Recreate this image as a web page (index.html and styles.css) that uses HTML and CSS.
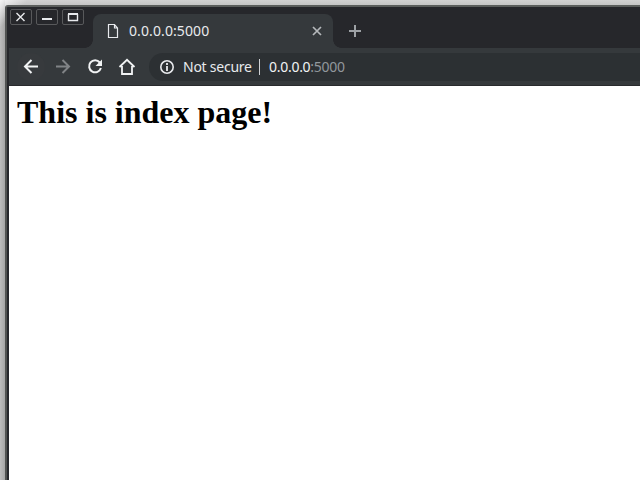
FILE: index.html
```
<!DOCTYPE html>
<html lang="en">
<head>
<meta charset="utf-8">
<title>0.0.0.0:5000</title>
<link rel="stylesheet" href="styles.css">
</head>
<body>
<div class="window">
  <header class="tabstrip">
    <div class="controls">
      <span class="control"><svg width="20" height="14" viewBox="0 0 20 14"><path d="M5.500 3l8 8M13.500 3l-8 8"/></svg></span>
      <span class="control"><svg width="20" height="14" viewBox="0 0 20 14"><path d="M5 9h10" stroke-width="2"/></svg></span>
      <span class="control"><svg width="20" height="14" viewBox="0 0 20 14"><path d="M5.500 4v6.500h9V4"/><path d="M5 4h10" stroke-width="2"/></svg></span>
    </div>
    <div class="tab">
      <svg class="page-icon" width="12" height="16" viewBox="0 0 12 16"><path d="M1.500 1.500h6l3 3.500v9.500h-9z M7.500 1.500V5h3"/></svg>
      <span class="tab-title">0.0.0.0:5000</span>
      <svg class="close" width="10" height="10" viewBox="0 0 10 10"><path d="M1 1l8 8M9 1L1 9"/></svg>
    </div>
    <svg class="new-tab" width="14" height="14" viewBox="0 0 14 14"><path d="M7 1v12M1 7h12"/></svg>
  </header>
  <nav class="toolbar">
    <span class="tool back"><svg width="16" height="16" viewBox="0 0 16 16"><path d="M15 7.500H2.500M8.500 1L2 7.500 8.500 14"/></svg></span>
    <span class="tool forward"><svg width="16" height="16" viewBox="0 0 16 16"><path d="M1 7.500h12.500M7.500 1L14 7.500 7.500 14"/></svg></span>
    <span class="tool"><svg width="16" height="16" viewBox="0 0 16 16"><path d="M12.800 3.500A6 6 0 1 0 13.900 9"/><path class="solid" d="M15 0.500v6.500H8.500z"/></svg></span>
    <span class="tool"><svg width="18" height="18" viewBox="0 0 18 18"><path d="M1.500 9L9 1.800l7.500 7.200M4 8v8h10V8" stroke-width="1.800"/></svg></span>
    <div class="address">
      <svg class="info" width="16" height="16" viewBox="0 0 16 16"><circle cx="8" cy="8" r="6.200"/><path d="M8 7v5M8 4v2" stroke-width="1.800"/></svg>
      <span class="security">Not secure</span>
      <span class="divider"></span>
      <span class="url">0.0.0.0<span class="port">:5000</span></span>
    </div>
  </nav>
  <main class="page"><h1>This is index page!</h1></main>
</div>
</body>
</html>
```
FILE: styles.css
```
* { box-sizing: border-box; }
body {
  margin: 0;
  width: 640px;
  height: 480px;
  overflow: hidden;
  padding: 5px 0 0 5px;
  background: linear-gradient(135deg, #f5f5f5 0, transparent 20px),
    linear-gradient(90deg, #bdbdbd, #a5a5a5 5px, transparent 5px),
    linear-gradient(#d2d2d2, #c5c5c5 5px);
}
svg { display: block; fill: none; stroke: currentColor; flex: none; }
.window {
  width: 635px;
  height: 475px;
  border-top: 2px solid #5b5e5c;
  border-left: 2px solid #515352;
  border-radius: 3px 0 0 0;
  padding-left: 2px;
  background: #26272b;
}
.tabstrip {
  display: flex;
  align-items: flex-start;
  height: 41px;
  color: #e8eaed;
}
.controls { display: flex; gap: 4px; padding: 2px 0 0 1px; width: 84px; }
.control {
  width: 22px;
  height: 16px;
  border: 1px solid #58595b;
  border-radius: 2px;
  stroke-width: 1.4;
}
.tab {
  position: relative;
  display: flex;
  align-items: center;
  width: 240px;
  height: 34px;
  margin-top: 7px;
  padding: 0 11px 0 14px;
  border-radius: 8px 8px 0 0;
  background: #35393c;
}
.tab::before,
.tab::after {
  content: "";
  position: absolute;
  bottom: 0;
  width: 8px;
  height: 8px;
}
.tab::before { left: -8px; background: radial-gradient(circle at 0 0, transparent 7.5px, #35393c 8px); }
.tab::after { right: -8px; background: radial-gradient(circle at 100% 0, transparent 7.5px, #35393c 8px); }
.page-icon { stroke-width: 1.2; }
.tab-title {
  flex: 1;
  margin-left: 10px;
  font: 14px/20px "Noto Sans", sans-serif;
  letter-spacing: 0.1px;
}
.close { color: #b5b8bb; stroke-width: 1.7; }
.new-tab { margin: 17px 0 0 15px; color: #9da1a5; stroke-width: 2; }
.toolbar {
  display: flex;
  align-items: center;
  height: 38px;
  padding-left: 8px;
  border-bottom: 1px solid #292a2d;
  background: #35393c;
  color: #f1f3f4;
}
.tool {
  display: flex;
  align-items: center;
  justify-content: center;
  width: 28px;
  height: 28px;
  margin-right: 4px;
  border-radius: 50%;
  stroke-width: 2;
}
.back { background: #373a3d; }
.forward { color: #808386; }
.solid { fill: currentColor; stroke: none; }
.address {
  display: flex;
  align-items: center;
  flex: 1;
  height: 28px;
  margin-left: 4px;
  padding-left: 10px;
  border-radius: 14px 0 0 14px;
  background: #2c3033;
  font: 14px/20px "Noto Sans", sans-serif;
  white-space: nowrap;
}
.info { stroke-width: 1.6; color: #e8eaed; }
.security { width: 76px; margin-left: 8px; letter-spacing: -0.25px; color: #e8eaed; }
.divider { width: 1px; height: 16px; background: #cfd1d4; }
.url { margin-left: 9px; letter-spacing: -0.28px; }
.port { color: #91979c; }
.page { height: 394px; background: #fff; }
h1 {
  margin: 0;
  padding: 8px;
  font: bold 32px/37px "Liberation Serif", serif;
  color: #000;
}
```
